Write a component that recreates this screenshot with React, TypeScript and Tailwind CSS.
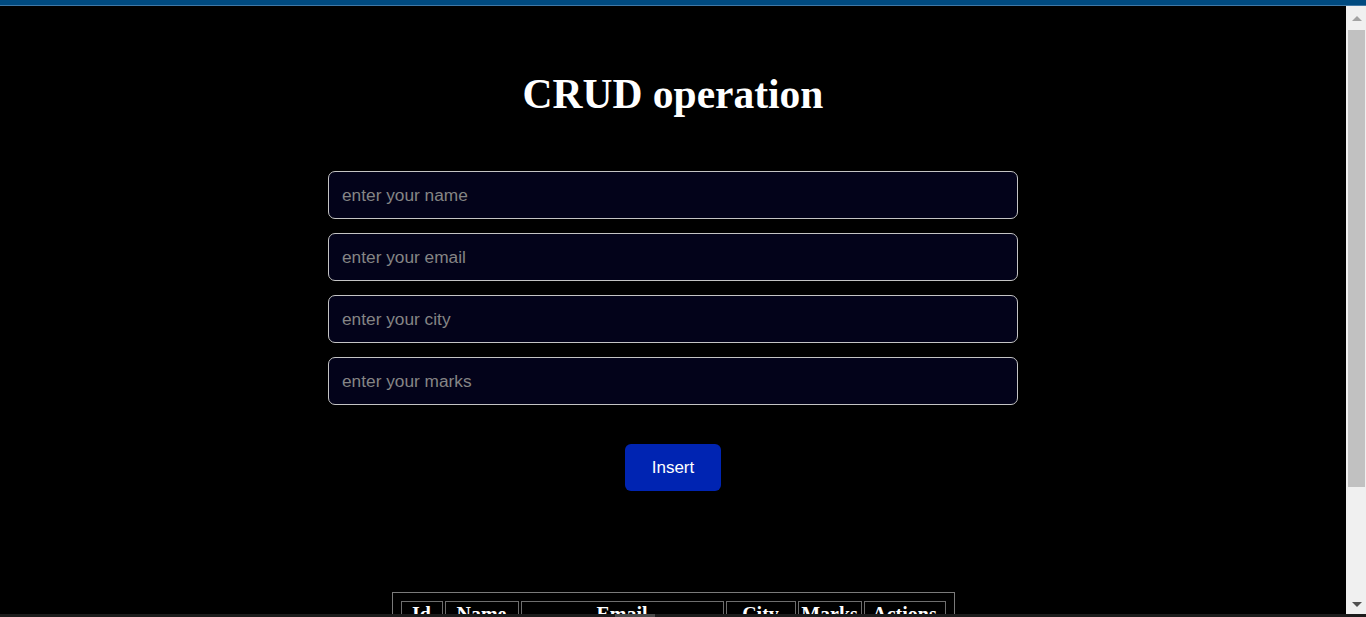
import React from "react";

const inputs = ["enter your name", "enter your email", "enter your city", "enter your marks"];
const headers: [string, number][] = [
  ["Id", 42],
  ["Name", 74],
  ["Email", 203],
  ["City", 70],
  ["Marks", 64],
  ["Actions", 82],
];

export default function App() {
  return (
    <div className="w-[1366px] h-[617px] flex flex-col bg-black overflow-hidden">
      <div className="h-[6px] shrink-0 bg-[#004a7f] border-b border-[#3f78a6]" />
      <div className="flex-1 flex min-h-0">
        <main className="flex-1 min-w-0 overflow-hidden flex flex-col items-center">
          <h1
            className="mt-[64px] text-[41.5px] leading-[48px] font-bold text-white"
            style={{ fontFamily: '"Liberation Serif", "Times New Roman", serif' }}
          >
            CRUD operation
          </h1>
          <form
            className="mt-[53px] w-[690px] flex flex-col gap-[14px]"
            style={{ fontFamily: '"Liberation Sans", Arial, sans-serif' }}
            onSubmit={(e) => e.preventDefault()}
          >
            {inputs.map((p) => (
              <input
                key={p}
                placeholder={p}
                className="h-[48px] w-full rounded-[7px] border border-[#c4c4c4] bg-[#03031a] px-[13px] pt-[1px] text-[17.3px] text-white placeholder:text-[#858585] outline-none"
              />
            ))}
            <div className="flex justify-center mt-[25px]">
              <button
                type="submit"
                className="w-[96px] h-[47px] rounded-[6px] bg-[#0024b2] text-white text-[17px]"
              >
                Insert
              </button>
            </div>
          </form>
          <div className="mt-[101px] border border-[#7a7a7a] px-[6px] pt-[6px] pb-[6px]">
            <table
              className="border-separate border-spacing-[2px] text-white"
              style={{ fontFamily: '"Liberation Serif", "Times New Roman", serif' }}
            >
              <thead>
                <tr>
                  {headers.map(([h, w]) => (
                    <th
                      key={h}
                      style={{ width: w }}
                      className="border border-[#6e6e6e] text-[20px] leading-[23px] font-bold px-[2px] pt-[1px] pb-[4px] text-center whitespace-nowrap overflow-hidden"
                    >
                      {h}
                    </th>
                  ))}
                </tr>
              </thead>
              <tbody>
                <tr>
                  {headers.map(([h]) => (
                    <td key={h} className="border border-[#6e6e6e] text-[17px] px-[4px] py-[4px] h-[40px]" />
                  ))}
                </tr>
              </tbody>
            </table>
          </div>
        </main>
        <div className="w-[20px] shrink-0 bg-[#f0f0f0] flex flex-col">
          <div className="h-[24px] flex items-center justify-center pl-[2px]">
            <div className="w-0 h-0 border-l-[5px] border-r-[5px] border-b-[5px] border-l-transparent border-r-transparent border-b-[#a3a3a3]" />
          </div>
          <div className="ml-[2px] mr-[1px] h-[457px] bg-[#c1c1c1]" />
          <div className="flex-1" />
          <div className="h-[20px] flex items-center justify-center pl-[2px]">
            <div className="w-0 h-0 border-l-[5px] border-r-[5px] border-t-[5px] border-l-transparent border-r-transparent border-t-[#505050]" />
          </div>
        </div>
      </div>
      <div className="h-[3px] shrink-0 bg-[#1c1c1c] flex">
        <div className="w-[615px]" />
        <div className="w-[40px] bg-[#4a4a4a]" />
      </div>
    </div>
  );
}
